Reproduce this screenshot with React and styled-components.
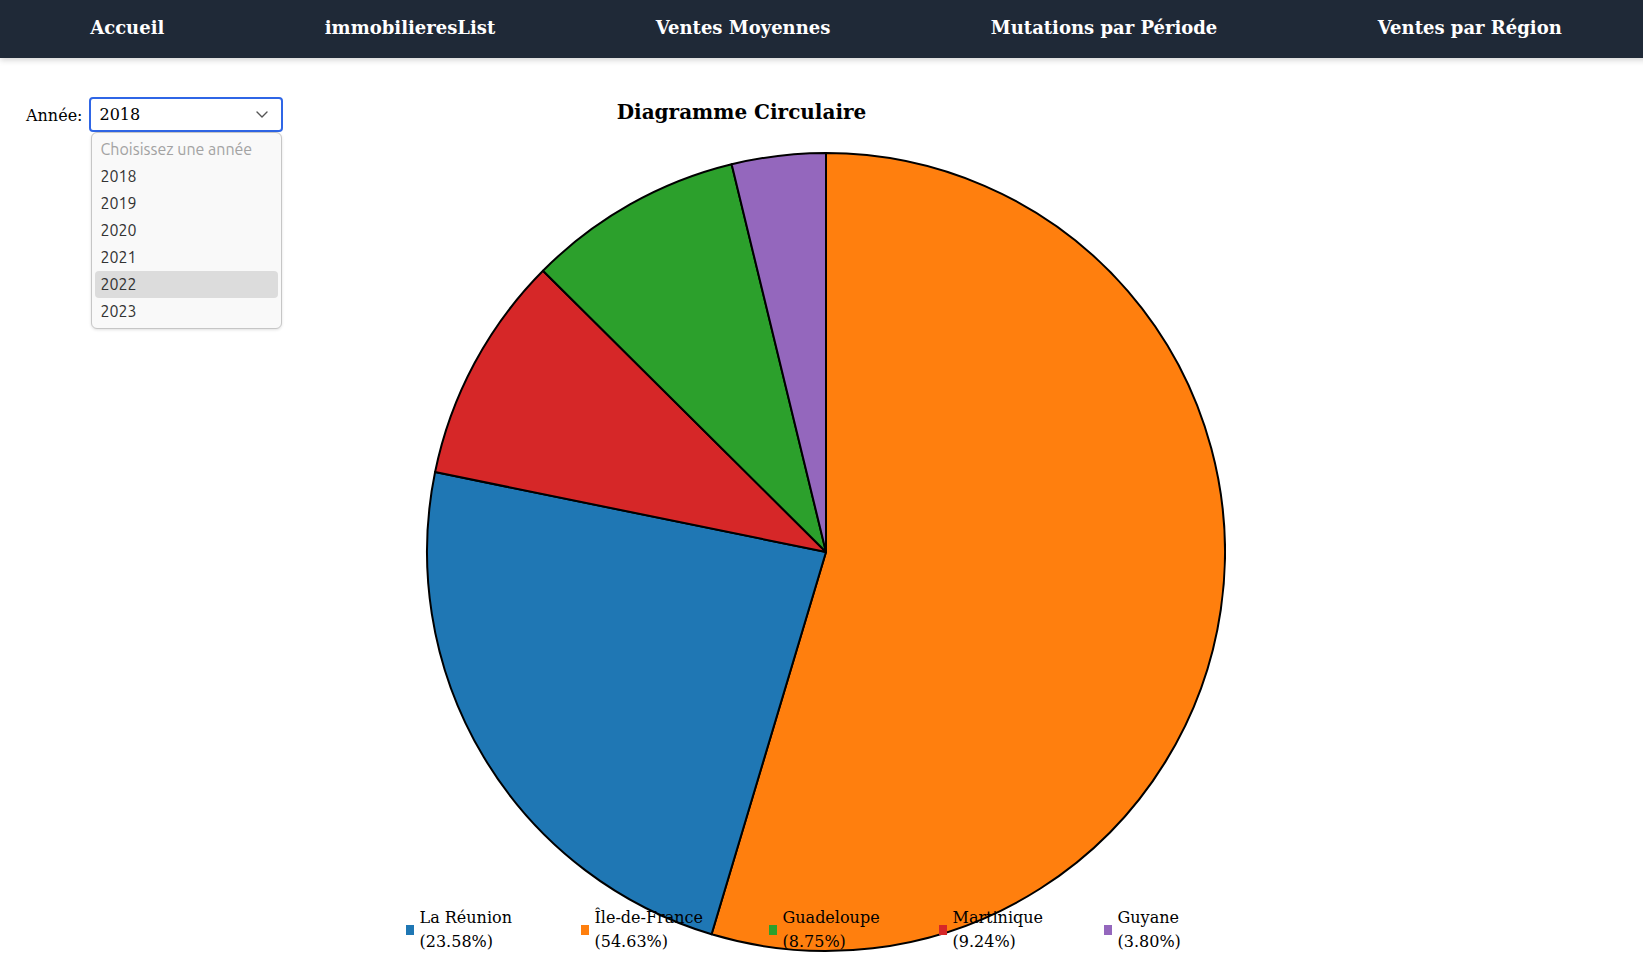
import React, { useState } from 'react';
import styled, { createGlobalStyle } from 'styled-components';

const links = ['Accueil', 'immobilieresList', 'Ventes Moyennes', 'Mutations par Période', 'Ventes par Région'];
const years = ['2018', '2019', '2020', '2021', '2022', '2023'];

// données dans l'ordre de la légende, la largeur sert à caler chaque entrée
const regions = [
  { name: 'La Réunion', value: 23.58, color: '#1f77b4', w: 175 },
  { name: 'Île-de-France', value: 54.63, color: '#ff7f0e', w: 188 },
  { name: 'Guadeloupe', value: 8.75, color: '#2ca02c', w: 170 },
  { name: 'Martinique', value: 9.24, color: '#d62728', w: 165 },
  { name: 'Guyane', value: 3.8, color: '#9467bd' },
];

const CX = 420;
const CY = 401;
const R = 399;

const point = (a) => [CX + R * Math.sin(a), CY - R * Math.cos(a)];

// comme d3.pie : tri décroissant, départ à midi, sens horaire
const buildSlices = (data) => {
  const total = data.reduce((s, d) => s + d.value, 0);
  let a0 = 0;
  return [...data]
    .sort((a, b) => b.value - a.value)
    .map((d) => {
      const a1 = a0 + (d.value / total) * Math.PI * 2;
      const [x0, y0] = point(a0);
      const [x1, y1] = point(a1);
      const large = a1 - a0 > Math.PI ? 1 : 0;
      const path = `M${CX},${CY} L${x0.toFixed(2)},${y0.toFixed(2)} A${R},${R} 0 ${large} 1 ${x1.toFixed(2)},${y1.toFixed(2)} Z`;
      a0 = a1;
      return { ...d, path };
    });
};

const App = () => {
  const [year, setYear] = useState('2018');
  const [hovered, setHovered] = useState('2022');
  const slices = buildSlices(regions);

  return (
    <>
      <GlobalStyle />
      <NavBar>
        {links.map((l) => (
          <NavLink key={l} href="#">{l}</NavLink>
        ))}
      </NavBar>
      <Main>
        <FilterGroup>
          <Label>Année:</Label>
          <SelectBox>
            <span>{year}</span>
            <svg width="12" height="7" viewBox="0 0 12 7">
              <path d="M1 1l5 5 5-5" stroke="#555" strokeWidth="1.4" fill="none" strokeLinecap="round" strokeLinejoin="round" />
            </svg>
            <OptionList>
              <Option $placeholder>Choisissez une année</Option>
              {years.map((y) => (
                <Option
                  key={y}
                  $active={hovered === y}
                  onMouseEnter={() => setHovered(y)}
                  onClick={() => setYear(y)}
                >
                  {y}
                </Option>
              ))}
            </OptionList>
          </SelectBox>
        </FilterGroup>

        <ChartSection>
          <Title>Diagramme Circulaire</Title>
          <ChartArea>
            <svg width="820" height="802" viewBox="0 0 820 802">
              {slices.map((s) => (
                <path key={s.name} d={s.path} fill={s.color} stroke="#000" strokeWidth="2" strokeLinejoin="round" />
              ))}
            </svg>
            <Legend>
              {regions.map((r) => (
                <LegendItem key={r.name} $w={r.w}>
                  <Swatch $color={r.color} />
                  <LegendText>
                    <span>{r.name}</span>
                    <span>({r.value.toFixed(2)}%)</span>
                  </LegendText>
                </LegendItem>
              ))}
            </Legend>
          </ChartArea>
        </ChartSection>
      </Main>
    </>
  );
};

export default App;

const GlobalStyle = createGlobalStyle`
  body {
    margin: 0;
    background: #fff;
    color: #000;
    font-family: "DejaVu Serif", "Liberation Serif", serif;
  }
`;

// barre de navigation (un peu plus large que la fenêtre, comme l'original)
const NavBar = styled.nav`
  display: flex;
  justify-content: space-around;
  align-items: center;
  width: calc(100% + 9px);
  height: 58px;
  padding: 0 10px 4px;
  box-sizing: border-box;
  background: #1f2937;
  box-shadow: 0 2px 6px rgba(0, 0, 0, 0.18);
`;

const NavLink = styled.a`
  color: #fff;
  font-size: 18px;
  font-weight: 700;
  text-decoration: none;
`;

const Main = styled.main`
  display: flex;
  align-items: flex-start;
  gap: 123px;
  padding: 39px 25px 0;
`;

const FilterGroup = styled.div`
  display: flex;
  align-items: center;
  gap: 6px;
`;

const Label = styled.label`
  font-size: 16px;
  padding: 1px 0 0 1px;
`;

const SelectBox = styled.div`
  position: relative;
  display: flex;
  align-items: center;
  justify-content: space-between;
  width: 194px;
  height: 35px;
  box-sizing: border-box;
  padding: 0 13px 0 9px;
  border: 2px solid #2f66e6;
  border-radius: 4px;
  font-size: 16px;
  background: #fff;
`;

// liste déroulante ouverte
const OptionList = styled.div`
  position: absolute;
  top: calc(100% + 2px);
  left: 0;
  width: 191px;
  box-sizing: border-box;
  padding: 3px;
  background: #f9f9f9;
  border: 1px solid #c6c6c6;
  border-radius: 6px;
  box-shadow: 0 1px 3px rgba(0, 0, 0, 0.12);
  font-family: "Ubuntu", "Open Sans", "Noto Sans", sans-serif;
  font-size: 16px;
  z-index: 2;
`;

const Option = styled.div`
  height: 27px;
  line-height: 26px;
  padding: 0 6px;
  border-radius: 4px;
  color: ${(p) => (p.$placeholder ? '#a3a3a3' : '#333')};
  background: ${(p) => (p.$active ? '#dcdcdc' : 'transparent')};
  cursor: default;
`;

const ChartSection = styled.section`
  display: flex;
  flex-direction: column;
`;

const Title = styled.h2`
  width: 672px;
  margin: 4px 0 27px;
  font-size: 20px;
  line-height: 23px;
  text-align: center;
`;

const ChartArea = styled.div`
  position: relative;
  width: 820px;
  height: 803px;

  svg {
    display: block;
  }
`;

const Legend = styled.div`
  position: absolute;
  left: 0;
  bottom: 0;
  display: flex;
`;

const LegendItem = styled.div`
  display: flex;
  align-items: center;
  width: ${(p) => (p.$w ? `${p.$w}px` : 'auto')};
`;

const Swatch = styled.span`
  flex-shrink: 0;
  width: 8px;
  height: 10px;
  margin-right: 6px;
  background: ${(p) => p.$color};
`;

const LegendText = styled.div`
  display: flex;
  flex-direction: column;
  font-size: 16px;
  line-height: 24px;
`;
